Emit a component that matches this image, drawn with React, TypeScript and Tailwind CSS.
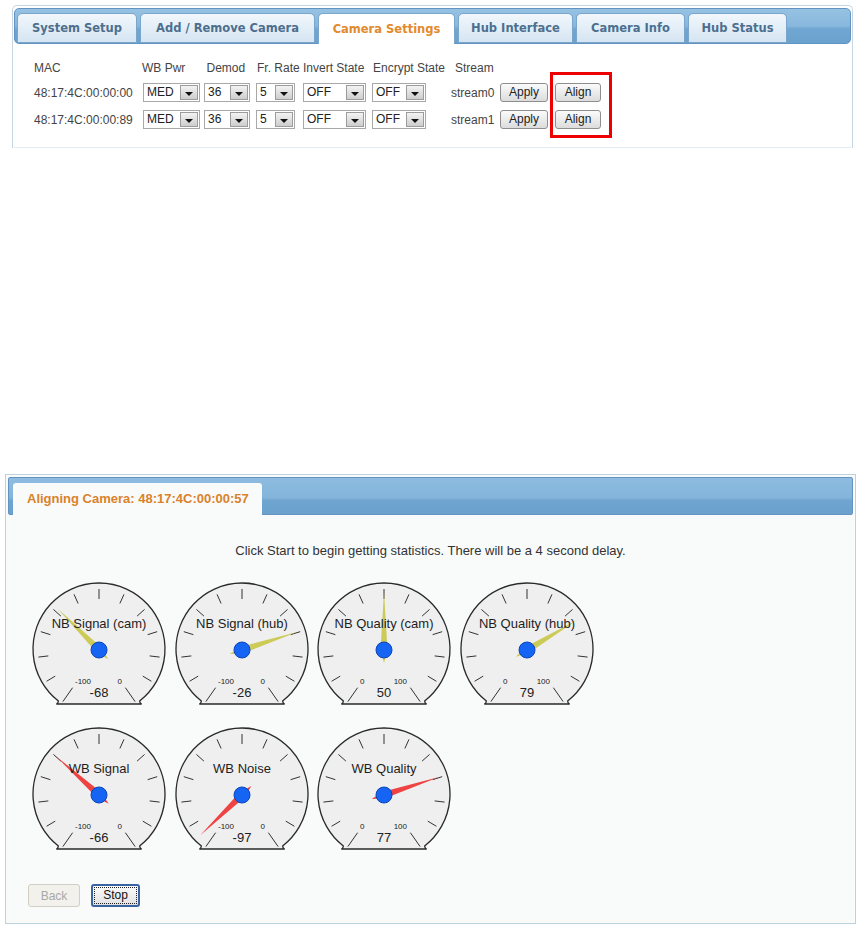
import React from 'react';

type GaugeData = {
  title: string;
  min: string;
  max: string;
  value: string;
  angle: number;
  color: string;
};

const YELLOW = '#c9c84e';
const RED = '#ee3838';

const gaugeRows: GaugeData[][] = [
  [
    { title: 'NB Signal (cam)', min: '-100', max: '0', value: '-68', angle: -45, color: YELLOW },
    { title: 'NB Signal (hub)', min: '-100', max: '0', value: '-26', angle: 72, color: YELLOW },
    { title: 'NB Quality (cam)', min: '0', max: '100', value: '50', angle: 0, color: YELLOW },
    { title: 'NB Quality (hub)', min: '0', max: '100', value: '79', angle: 59, color: YELLOW },
  ],
  [
    { title: 'WB Signal', min: '-100', max: '0', value: '-66', angle: -48, color: RED },
    { title: 'WB Noise', min: '-100', max: '0', value: '-97', angle: -134, color: RED },
    { title: 'WB Quality', min: '0', max: '100', value: '77', angle: 72, color: RED },
  ],
];

const tabs = [
  { label: 'System Setup', w: 'w-[120px]' },
  { label: 'Add / Remove Camera', w: 'w-[175px]' },
  { label: 'Camera Settings', w: 'w-[137px]', active: true },
  { label: 'Hub Interface', w: 'w-[115px]' },
  { label: 'Camera Info', w: 'w-[109px]' },
  { label: 'Hub Status', w: 'w-[99px]' },
];

const cameras = [
  { mac: '48:17:4C:00:00:00', stream: 'stream0' },
  { mac: '48:17:4C:00:00:89', stream: 'stream1' },
];

function Gauge({ g }: { g: GaugeData }) {
  const cx = 68;
  const cy = 68;
  const r = 66;
  const by = 52;
  const bx = Math.sqrt(r * r - by * by);
  const outline = `M ${cx - bx - 2} ${cy + by + 2} Q ${cx - bx} ${cy + by + 1} ${cx - bx} ${cy + by - 1} A ${r} ${r} 0 1 1 ${cx + bx} ${cy + by - 1} Q ${cx + bx} ${cy + by + 1} ${cx + bx + 2} ${cy + by + 2} Z`;

  const ticks = Array.from({ length: 13 }, (_, i) => {
    const a = ((-145 + (i * 290) / 12) * Math.PI) / 180;
    const major = i === 0 || i === 12;
    const r1 = major ? 46 : 51;
    const r2 = major ? 63 : 61;
    return {
      x1: cx + r1 * Math.sin(a),
      y1: cy - r1 * Math.cos(a),
      x2: cx + r2 * Math.sin(a),
      y2: cy - r2 * Math.cos(a),
    };
  });

  return (
    <svg width="136" height="124" viewBox="0 0 136 124" className="shrink-0">
      <path d={outline} fill="#efefef" stroke="#2a2a2a" strokeWidth="1.3" />
      {ticks.map((t, i) => (
        <line key={i} x1={t.x1} y1={t.y1} x2={t.x2} y2={t.y2} stroke="#333" strokeWidth="1" />
      ))}
      <g fontFamily="Liberation Sans, Arial, sans-serif" fill="#222">
        <text x={cx - 24} y={cy + 34} fontSize="8" textAnchor="start">{g.min}</text>
        <text x={cx + 23} y={cy + 34} fontSize="8" textAnchor="end">{g.max}</text>
        <text x={cx} y={cy + 47} fontSize="13" textAnchor="middle">{g.value}</text>
      </g>
      <polygon
        points={`${cx},${cy - 58} ${cx + 3.5},${cy} ${cx},${cy + 13} ${cx - 3.5},${cy}`}
        fill={g.color}
        fillOpacity="0.95"
        transform={`rotate(${g.angle} ${cx} ${cy})`}
      />
      <text
        x={cx}
        y={cy - 22}
        fontSize="13"
        textAnchor="middle"
        fill="#1e1e1e"
        fontFamily="Liberation Sans, Arial, sans-serif"
      >
        {g.title}
      </text>
      <circle cx={cx} cy={cy} r="8" fill="#1564f4" stroke="#0c45b8" strokeWidth="1" />
    </svg>
  );
}

function Select({ value, w }: { value: string; w: string }) {
  return (
    <div className={`${w} h-[19px] flex border border-[#a8a8a8] bg-white`}>
      <span className="flex-1 pl-[3px] leading-[17px] text-[12px] text-[#222]">{value}</span>
      <span className="w-[18px] m-[1px] border border-[#9c9c9c] bg-[linear-gradient(180deg,#f3f3f3,#cdcdcd)] flex items-end justify-center pb-[3px]">
        <span className="w-0 h-0 border-l-[4px] border-r-[4px] border-t-[4px] border-l-transparent border-r-transparent border-t-[#111]" />
      </span>
    </div>
  );
}

function SmallButton({ label, w }: { label: string; w: string }) {
  return (
    <button className={`${w} h-[19px] rounded-[3px] border border-[#8e8e8e] bg-[linear-gradient(180deg,#fbfbfb,#dcdcdc)] text-[12px] leading-[17px] text-[#222]`}>
      {label}
    </button>
  );
}

export default function App() {
  return (
    <div className="w-[865px] h-[933px] bg-white overflow-hidden font-['Liberation_Sans',Arial,sans-serif] text-[#444]">
      {/* Camera settings panel */}
      <div className="ml-[12px] mt-[5px] w-[841px] border border-b-0 border-[#c6d7e3] rounded-t-[5px] pt-[2px] px-[1px]">
        <div className="h-[36px] rounded-[5px] border border-[#6393c0] bg-[linear-gradient(180deg,#96c2e3_0%,#88b8dd_50%,#70a7d2_58%,#6aa2ce_100%)] flex items-end gap-[3px] pl-[2px]">
          {tabs.map((t) =>
            t.active ? (
              <div
                key={t.label}
                className={`${t.w} h-[31px] -mb-[1px] pt-[2px] rounded-t-[5px] border border-b-0 border-[#7aa6cc] bg-white flex items-center justify-center font-['DejaVu_Sans',Verdana,sans-serif] font-bold text-[11.5px] text-[#e28a2c]`}
              >
                {t.label}
              </div>
            ) : (
              <div
                key={t.label}
                className={`${t.w} h-[30px] pt-[2px] rounded-t-[5px] border border-[#7aa6cc] bg-[linear-gradient(180deg,#f1f7fc,#d5e5f2)] flex items-center justify-center font-['DejaVu_Sans',Verdana,sans-serif] font-bold text-[11.5px] text-[#4c6f8f]`}
              >
                {t.label}
              </div>
            ),
          )}
        </div>
        <div className="relative h-[104px] pt-[16px] pl-[20px] text-[12px] border-b border-[#e3ebf0]">
          <div className="grid grid-cols-[108px_62px_52px_47px_69px_79px_49px_55px_60px] leading-[16px]">
            <span>MAC</span>
            <span>WB Pwr</span>
            <span className="pl-[2.5px]">Demod</span>
            <span className="pl-[1px]">Fr. Rate</span>
            <span>Invert State</span>
            <span className="pl-[1px]">Encrypt State</span>
            <span className="pl-[4px]">Stream</span>
            <span />
            <span />
          </div>
          <div className="flex flex-col gap-[8px] mt-[7px]">
            {cameras.map((c) => (
              <div
                key={c.mac}
                className="grid grid-cols-[108px_62px_52px_47px_69px_79px_49px_55px_60px] items-center h-[19px]"
              >
                <span>{c.mac}</span>
                <div className="pl-[1px]"><Select value="MED" w="w-[57px]" /></div>
                <Select value="36" w="w-[46px]" />
                <Select value="5" w="w-[39px]" />
                <Select value="OFF" w="w-[63px]" />
                <Select value="OFF" w="w-[54px]" />
                <span>{c.stream}</span>
                <SmallButton label="Apply" w="w-[48px]" />
                <SmallButton label="Align" w="w-[46px]" />
              </div>
            ))}
          </div>
          <div className="absolute left-[536px] top-[28px] w-[62px] h-[66px] border-[3px] border-[#ee0000]" />
        </div>
      </div>

      {/* Align dialog */}
      <div className="ml-[5px] mt-[326px] w-[851px] h-[450px] border border-[#bcd2df] bg-[#f9fbfb] flex flex-col">
        <div className="mx-[2px] mt-[2px] h-[38px] rounded-[2px] border border-[#6393c0] bg-[linear-gradient(180deg,#8ebce0_0%,#84b4da_55%,#6fa5d0_62%,#6aa1cd_100%)] flex items-end pl-[4px]">
          <div className="w-[249px] h-[32px] -mb-[1px] rounded-t-[3px] bg-[#f9fbfb] flex items-center pl-[14px] text-[13px] font-bold text-[#d9822b]">
            Aligning Camera: 48:17:4C:00:00:57
          </div>
        </div>
        <div className="pt-[28px] text-center text-[13px] leading-[15px] text-[#333]">
          Click Start to begin getting statistics. There will be a 4 second delay.
        </div>
        <div className="mt-[24px] pl-[25px] flex flex-col gap-[21px]">
          {gaugeRows.map((row, i) => (
            <div key={i} className="flex gap-[6.5px]">
              {row.map((g) => (
                <Gauge key={g.title} g={g} />
              ))}
            </div>
          ))}
        </div>
        <div className="mt-[33px] pl-[22px] flex gap-[11px]">
          <button
            disabled
            className="w-[52px] h-[23px] rounded-[3px] border border-[#d2cec4] bg-[#f3f1eb] text-[12px] text-[#a8a8a8]"
          >
            Back
          </button>
          <button className="w-[49px] h-[23px] rounded-[3px] border-2 border-[#3a63a2] bg-[linear-gradient(180deg,#fbfbfb,#e2e2e2)] p-[1px]">
            <span className="block h-full border border-dotted border-[#222] text-[12px] leading-[15px] text-[#111]">
              Stop
            </span>
          </button>
        </div>
      </div>
    </div>
  );
}
